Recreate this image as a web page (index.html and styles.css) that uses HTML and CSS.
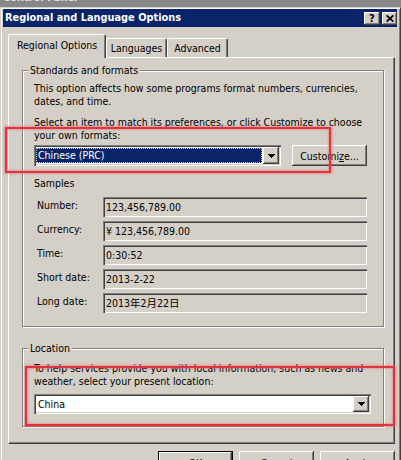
FILE: index.html
```html
<!DOCTYPE html>
<html>
<head>
<meta charset="utf-8">
<title>Regional and Language Options</title>
<link rel="stylesheet" href="styles.css">
</head>
<body>
<div class="screen">
  <div class="topstrip"><span>Control Panel</span></div>
  <div class="dialog">
    <div class="titlebar">
      <span class="title">Regional and Language Options</span>
      <div class="tbtns">
        <span class="tbtn help">?</span>
        <span class="tbtn close"><svg width="8" height="7" viewBox="0 0 8 7"><path d="M0.6 0.4 L7.4 6.6 M7.4 0.4 L0.6 6.6" stroke="#000" stroke-width="1.7" fill="none"/></svg></span>
      </div>
    </div>
    <div class="body">
      <div class="tabs">
        <div class="tab active tab-regional">Regional Options</div>
        <div class="tab tab-lang">Languages</div>
        <div class="tab tab-adv">Advanced</div>
      </div>
      <div class="panel">
        <div class="group g1">
          <span class="legend">Standards and formats</span>
          <p class="txt p1">This option affects how some programs format numbers, currencies,<br>dates, and time.</p>
          <p class="txt p2">Select an item to match its preferences, or click Customize to choose<br>your own formats:</p>
          <div class="combo-row">
            <div class="combo combo1">
              <span class="val sel">Chinese (PRC)</span>
              <span class="dd"><svg width="7" height="4" viewBox="0 0 7 4"><path d="M0 0h7v1h-1v1h-1v1h-1v1h-1v-1h-1v-1h-1v-1h-1z" fill="#000"/></svg></span>
            </div>
            <button class="btn customize">Customi<u>z</u>e...</button>
          </div>
          <div class="samples-label">Samples</div>
          <div class="samples">
            <span class="slabel">Number:</span><span class="field">123,456,789.00</span>
            <span class="slabel">Currency:</span><span class="field">¥ 123,456,789.00</span>
            <span class="slabel">Time:</span><span class="field">0:30:52</span>
            <span class="slabel">Short date:</span><span class="field">2013-2-22</span>
            <span class="slabel">Long date:</span><span class="field">2013年2月22日</span>
          </div>
        </div>
        <div class="group g2">
          <span class="legend">Location</span>
          <p class="txt p3">To help services provide you with local information, such as news and<br>weather, select your present location:</p>
          <div class="combo combo2">
            <span class="val">China</span>
            <span class="dd"><svg width="7" height="4" viewBox="0 0 7 4"><path d="M0 0h7v1h-1v1h-1v1h-1v1h-1v-1h-1v-1h-1v-1h-1z" fill="#000"/></svg></span>
          </div>
        </div>
      </div>
      <div class="buttons">
        <button class="btn big default">OK</button>
        <button class="btn big">Cancel</button>
        <button class="btn big">Apply</button>
      </div>
    </div>
  </div>
  <div class="ann a1"></div>
  <div class="ann a2"></div>
</div>
</body>
</html>
```
FILE: styles.css
```css
* { box-sizing: border-box; }
html, body { margin: 0; padding: 0; }
body {
  width: 401px;
  height: 460px;
  overflow: hidden;
  background: #d4d0c8;
  font-family: "DejaVu Sans Condensed", "DejaVu Sans", sans-serif;
  font-size: 10.5px;
  color: #000;
}
.screen { position: relative; width: 401px; height: 460px; overflow: hidden; }

.topstrip { height: 7px; background: #878787; overflow: hidden; }
.topstrip span {
  display: block;
  margin-top: -9px;
  padding-left: 3px;
  font-family: "DejaVu Sans", sans-serif;
  font-weight: bold;
  font-size: 9.8px;
  line-height: 13px;
  color: #e4e4e4;
}

.dialog {
  height: 453px;
  border-top: 1px solid #d4d0c8;
  border-left: 1px solid #d4d0c8;
  border-right: 1px solid #404040;
  box-shadow: inset 1px 1px 0 #fff, inset -1px 0 0 #808080;
  padding: 1px 3px 0 2px;
}

.titlebar {
  height: 18px;
  background: #0a246a;
  display: flex;
  align-items: center;
  justify-content: space-between;
  padding: 0 0 0 2px;
}
.title {
  color: #fff;
  font-family: "DejaVu Sans", sans-serif;
  font-weight: bold;
  font-size: 9.8px;
  line-height: 18px;
}
.tbtns { display: flex; gap: 2px; }
.tbtn {
  width: 16px;
  height: 13px;
  background: #d4d0c8;
  box-shadow: inset -1px -1px 0 #404040, inset 1px 1px 0 #fff, inset -2px -2px 0 #808080;
  display: flex;
  align-items: center;
  justify-content: center;
  font-family: "DejaVu Sans", sans-serif;
  font-weight: bold;
  font-size: 10px;
  line-height: 13px;
}
.tbtn.close { width: 15px; }

.body { padding: 7px 2px 0 5px; }

.tabs {
  display: flex;
  align-items: flex-end;
  height: 24px;
  margin-bottom: -1px;
  position: relative;
  z-index: 1;
}
.tab {
  height: 19px;
  margin-bottom: 1px;
  padding-top: 3px;
  line-height: 13px;
  text-align: center;
  border-top: 1px solid #fff;
  border-left: 1px solid #fff;
  border-right: 1px solid #404040;
  box-shadow: inset -1px 0 0 #808080;
  border-radius: 2px 2px 0 0;
}
.tab.active {
  height: 24px;
  margin-bottom: 0;
  padding-top: 4px;
  background: #d4d0c8;
}
.tab-regional { width: 98px; }
.tab-lang { width: 61px; }
.tab-adv { width: 61px; }

.panel {
  height: 387px;
  border-top: 1px solid #fff;
  border-left: 1px solid #fff;
  border-right: 1px solid #404040;
  border-bottom: 1px solid #404040;
  box-shadow: inset -1px -1px 0 #808080;
  padding: 0 0 0 13px;
}

.group {
  width: 362px;
  border: 1px solid #808080;
  box-shadow: inset 1px 1px 0 #fff, 1px 1px 0 #fff;
  padding: 0 12px 0 11px;
}
.g1 { margin-top: 12px; height: 257px; }
.g2 { margin-top: 21px; height: 79px; }
.legend {
  display: block;
  width: max-content;
  margin: -7px 0 0 -6px;
  padding: 0 2px;
  background: #d4d0c8;
  line-height: 13px;
}

.txt { margin: 0; line-height: 13px; white-space: nowrap; }
.p1 { margin-top: 5px; }
.p2 { margin-top: 8px; }
.p3 { margin-top: 7px; }

.combo-row { display: flex; margin-top: 3px; height: 21px; }
.combo {
  display: flex;
  background: #fff;
  padding: 2px;
  box-shadow: inset 1px 1px 0 #808080, inset 2px 2px 0 #404040, inset -1px -1px 0 #fff, inset -2px -2px 0 #d4d0c8;
}
.combo1 { width: 247px; height: 21px; }
.combo2 { width: 337px; height: 20px; margin-top: 6px; }
.val {
  flex: 1;
  padding-left: 2px;
  line-height: 15px;
  margin: 1px 1px 1px 0;
}
.val.sel {
  background: #0a246a;
  color: #fff;
  outline: 1px dotted #d8d4a0;
  outline-offset: -1px;
}
.dd {
  width: 16px;
  background: #d4d0c8;
  box-shadow: inset -1px -1px 0 #404040, inset 1px 1px 0 #fff, inset -2px -2px 0 #808080;
  display: flex;
  align-items: center;
  justify-content: center;
}
.dd svg { display: block; }

.btn {
  background: #d4d0c8;
  border: 0;
  padding: 0;
  font: inherit;
  color: #000;
  box-shadow: inset -1px -1px 0 #404040, inset 1px 1px 0 #fff, inset -2px -2px 0 #808080;
}
.customize { width: 75px; height: 21px; margin-left: 11px; }
.customize u { text-decoration: underline; }

.samples-label { margin-top: 11px; line-height: 13px; }
.samples {
  margin-top: 7px;
  display: grid;
  grid-template-columns: 69px 264px;
  grid-auto-rows: 20px;
  row-gap: 4px;
}
.slabel { padding: 2px 0 0 3px; line-height: 13px; }
.field {
  height: 20px;
  padding-left: 3px;
  line-height: 20px;
  background: #d4d0c8;
  box-shadow: inset 1px 1px 0 #808080, inset 2px 2px 0 #404040, inset -1px -1px 0 #fff, inset -2px -2px 0 #d4d0c8;
  font-family: "DejaVu Sans Condensed", "DejaVu Sans", "Noto Sans CJK SC", sans-serif;
}

.buttons {
  display: flex;
  justify-content: flex-end;
  gap: 6px;
  margin-top: 7px;
}
.btn.big { width: 75px; height: 23px; }
.btn.default {
  box-shadow: inset 0 0 0 1px #000, inset -2px -2px 0 #404040, inset 2px 2px 0 #fff, inset -3px -3px 0 #808080;
}

.ann {
  position: absolute;
  border: 2px solid #e0333b;
  box-shadow: 0 0 2px 1px rgba(240, 90, 100, 0.5), inset 0 0 2px 1px rgba(240, 90, 100, 0.45);
  pointer-events: none;
}
.a1 { left: 5px; top: 127px; width: 326px; height: 46px; }
.a2 { left: 25px; top: 366px; width: 370px; height: 60px; }
```
